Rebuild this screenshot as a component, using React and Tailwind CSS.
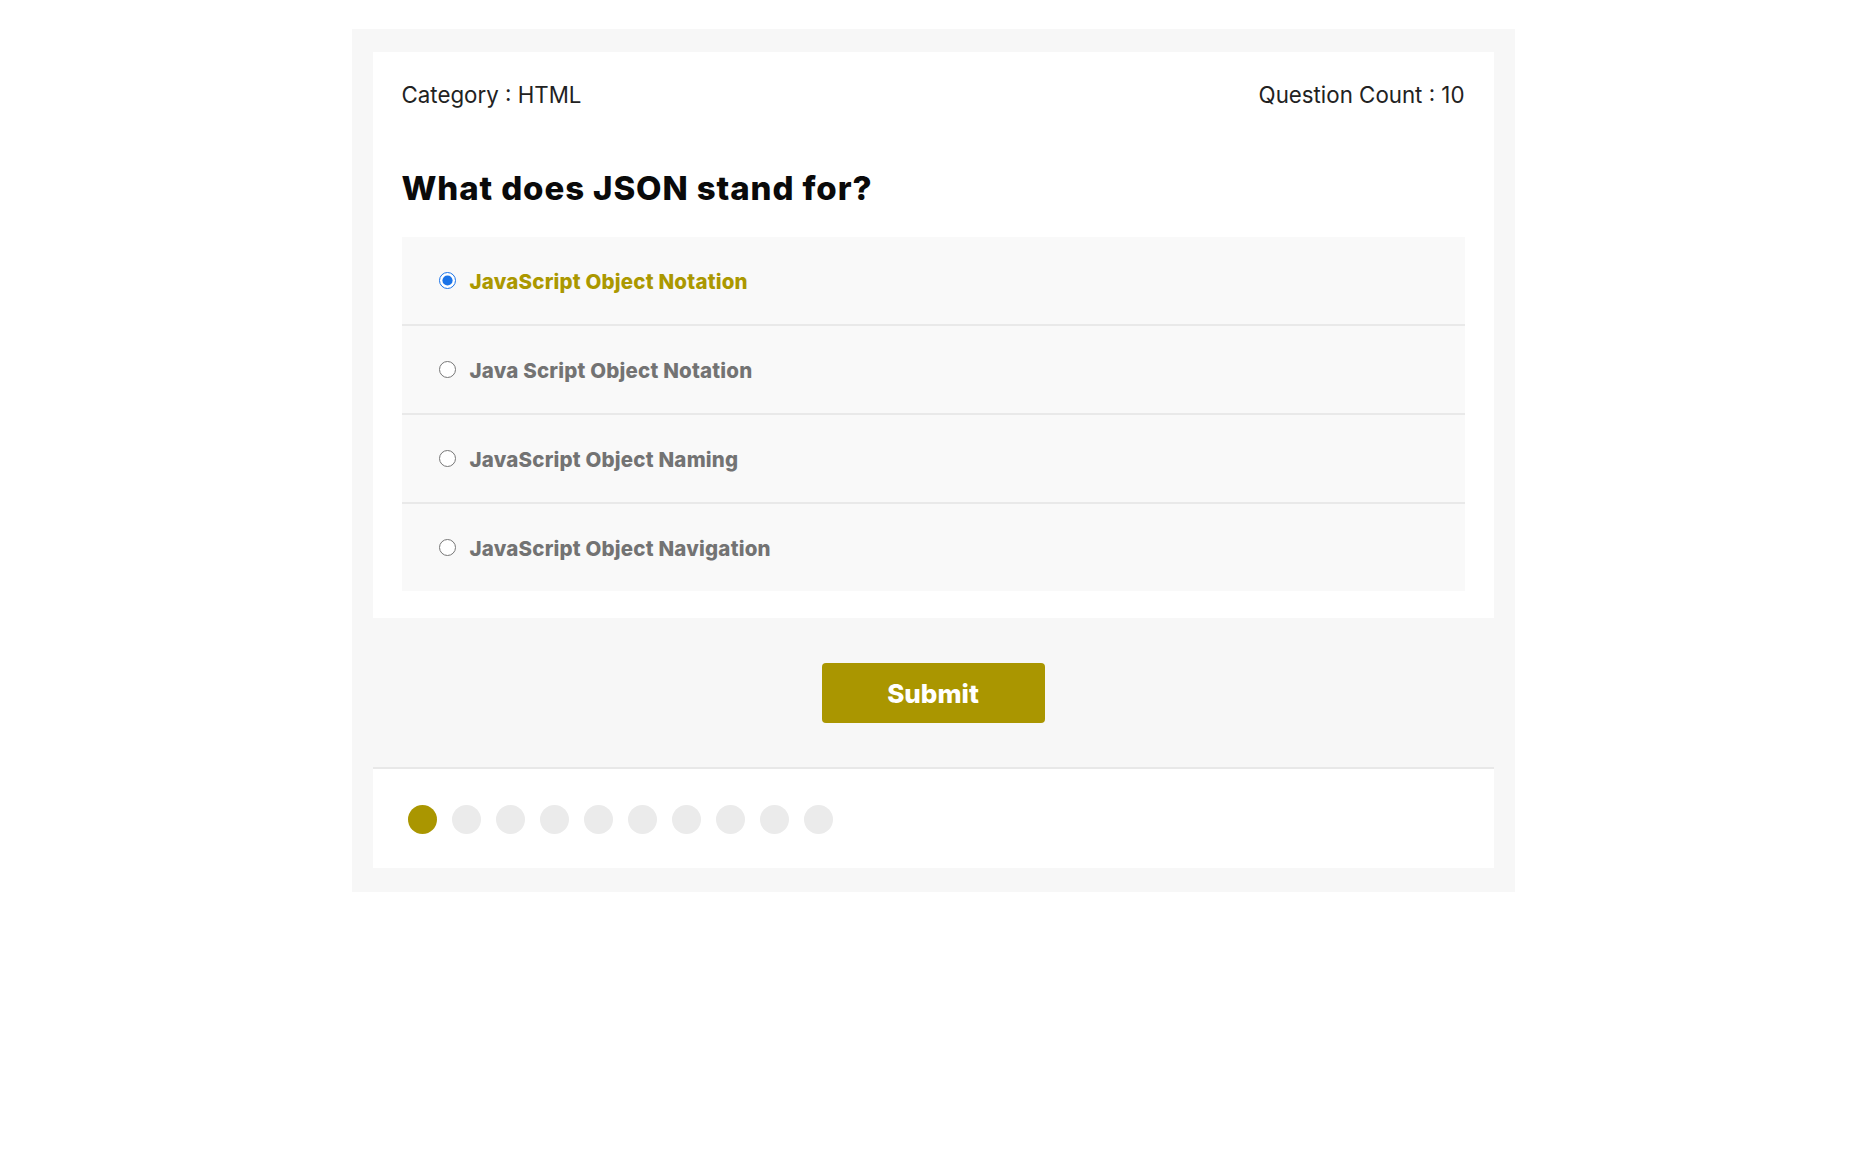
import { useState } from 'react';

const options = [
  'JavaScript Object Notation',
  'Java Script Object Notation',
  'JavaScript Object Naming',
  'JavaScript Object Navigation',
];

const QuizCard = () => {
  const [selected, setSelected] = useState(0);
  const current = 0;

  return (
    <div className="min-h-screen bg-white pt-[29px]" style={{ fontFamily: 'Inter, "Noto Sans", sans-serif' }}>
      <div className="w-[1163px] mx-auto bg-[#f7f7f7] px-[21px] pt-[23px] pb-[24px]">
        <div className="bg-white px-[29px] pt-[28px] pb-[27px]">
          <div className="flex justify-between text-[22.3px] leading-[30px] text-[#222]">
            <span>Category : HTML</span>
            <span>Question Count : 10</span>
          </div>

          <h2 className="mt-[58px] text-[33px] leading-[40px] font-extrabold tracking-[0.9px] text-[#0a0a0a]">
            What does JSON stand for?
          </h2>

          <div className="mt-[29px]">
            {options.map((opt, i) => (
              <label
                key={opt}
                className={`flex items-center pl-[37px] bg-[#f9f9f9] cursor-pointer ${
                  i < options.length - 1 ? 'h-[89px] border-b-2 border-[#e9e9e9]' : 'h-[87px]'
                }`}
              >
                <input
                  type="radio"
                  name="answer"
                  checked={selected === i}
                  onChange={() => setSelected(i)}
                  className="m-0 w-[17px] h-[17px] accent-[#1a73e8]"
                />
                <span
                  className={`ml-[14px] mt-[3px] text-[20.5px] font-extrabold tracking-[0.2px] ${
                    selected === i ? 'text-[#ab9800]' : 'text-[#737373]'
                  }`}
                >
                  {opt}
                </span>
              </label>
            ))}
          </div>
        </div>

        <div className="flex justify-center pt-[45px] pb-[44px]">
          <button
            type="button"
            className="w-[223px] h-[60px] rounded-[4px] bg-[#aa9600] text-white text-[26px] font-extrabold"
          >
            Submit
          </button>
        </div>

        <div className="bg-white border-t-2 border-[#e8e8e8] pl-[35px] pt-[36px] pb-[34px]">
          <div className="flex gap-[15px]">
            {Array.from({ length: 10 }).map((_, i) => (
              <div
                key={i}
                className={`w-[29px] h-[29px] rounded-full ${i === current ? 'bg-[#aa9600]' : 'bg-[#ebebeb]'}`}
              />
            ))}
          </div>
        </div>
      </div>
    </div>
  );
};

export default function App() {
  return <QuizCard />;
}
